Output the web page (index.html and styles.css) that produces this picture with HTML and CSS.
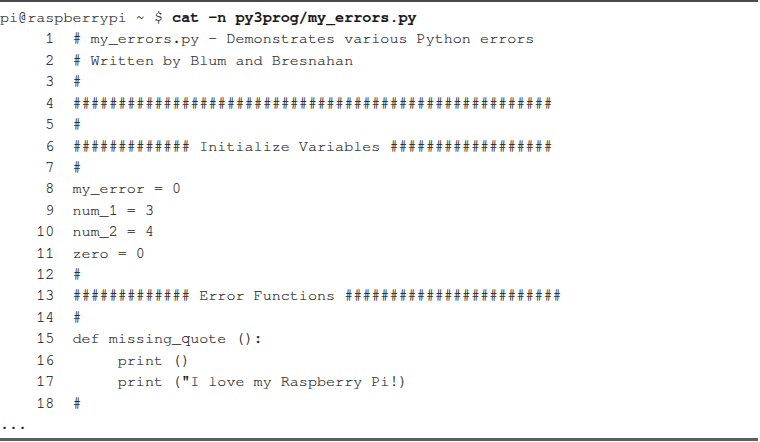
FILE: index.html
```html
<!DOCTYPE html>
<html>
<head>
<meta charset="utf-8">
<link rel="stylesheet" href="styles.css">
</head>
<body>
<div class="listing">
<pre class="code">pi@raspberrypi ~ $ <b class="cmd">cat -n py3prog/my_errors.py</b>
     1	# my_errors.py - Demonstrates various Python errors
     2	# Written by Blum and Bresnahan
     3	#
     4	#####################################################
     5	#
     6	############# Initialize Variables ##################
     7	#
     8	my_error = 0
     9	num_1 = 3
    10	num_2 = 4
    11	zero = 0
    12	#
    13	############# Error Functions ########################
    14	#
    15	def missing_quote ():
    16	     print ()
    17	     print ("I love my Raspberry Pi!)
    18	#
...</pre>
</div>
</body>
</html>
```
FILE: styles.css
```css
html, body {
  margin: 0;
  padding: 0;
  background: #ffffff;
}
.listing {
  width: 758px;
  border-top: 2px solid #4a4a4a;
  border-bottom: 3px solid #5e5e5e;
}
.code {
  margin: 0;
  padding: 5px 0 3px 0;
  font-family: "Nimbus Mono PS", "Nimbus Mono L", "FreeMono", "Courier 10 Pitch", "Courier", "Liberation Mono", monospace;
  font-size: 15.1px;
  line-height: 21.42px;
  color: #1a1a1a;
  -webkit-text-stroke: 0.15px #1a1a1a;
  tab-size: 8;
  -moz-tab-size: 8;
  white-space: pre;
}
.cmd {
  font-weight: bold;
}
```
